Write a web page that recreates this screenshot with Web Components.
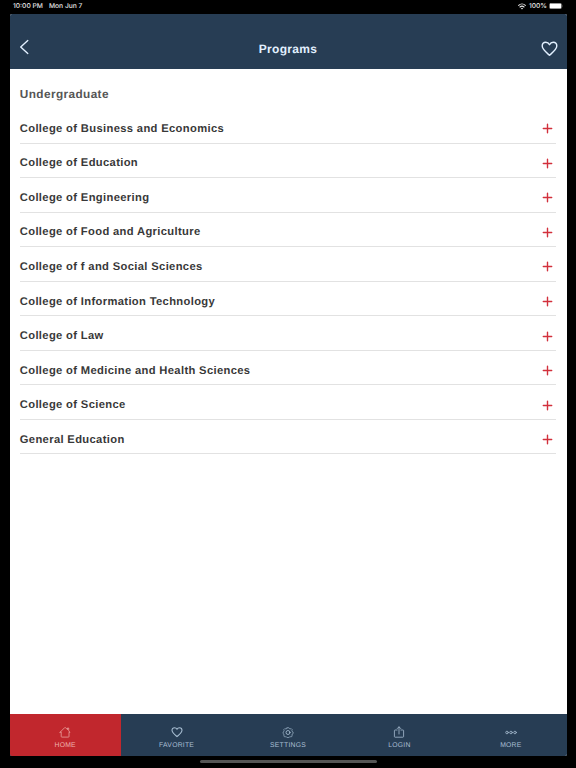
<!DOCTYPE html>
<html lang="en">
<head>
<meta charset="utf-8">
<title>Programs</title>
<style>
    html, body {
        margin: 0;
        height: 100%;
        background: #000;
        overflow: hidden;
    }
</style>
</head>
<body>
<programs-app></programs-app>

<script>
const icons = {
    back: '<svg width="10" height="16" viewBox="0 0 10 16"><path d="M8.8 1.6 1.7 8l7.1 6.4" stroke-width="1.4"/></svg>',
    heart: '<svg width="17" height="16" viewBox="0 0 17 16"><path d="M8.5 14.3C5.8 11.9 1.2 8.4 1.2 5.1c0-2.2 1.6-3.8 3.6-3.8 1.6 0 2.9.8 3.7 2.4.8-1.6 2.1-2.4 3.7-2.4 2 0 3.6 1.6 3.6 3.8 0 3.3-4.6 6.8-7.3 9.2z" stroke-width="1.4"/></svg>',
    plus: '<svg width="11" height="11" viewBox="0 0 11 11"><path d="M5.5 1.3v8.4M1.3 5.5h8.4" stroke-width="1.4"/></svg>',
    home: '<svg width="12" height="12" viewBox="0 0 12 12"><path d="M2.2 6.3v4.2q0 .6.6.6h6.600q.6 0 .6-.6V6.3h1L9.700 4.900V2H8.500v1.700L6.600 1.700q-.5-.5-1 0L1 6.3z" stroke-width=".7"/></svg>',
    favorite: '<svg width="12" height="12" viewBox="0 0 12 12"><path d="M6 10.600C4 8.900 1 6.700 1 4.300c0-1.500 1.100-2.600 2.500-2.600C4.600 1.700 5.500 2.300 6 3.300c.5-1 1.400-1.600 2.500-1.600C9.900 1.700 11 2.800 11 4.300c0 2.400-3 4.600-5 6.300z" stroke-width="1.050"/></svg>',
    settings: '<svg width="12" height="12" viewBox="0 0 12 12"><path d="M5.200 1.700h1.600l.5.900.9.3 1-.3 1 1-.3 1 .3.900.9.500v1.600l-.9.500-.3.900.3 1-1 1-1-.3-.9.300-.5.500H5.200l-.5-.5-.9-.3-1 .3-1-1 .3-1-.3-.9-.7-.5V6l.7-.5.3-.9-.3-1 1-1 1 .3.900-.3z" stroke-width=".65"/><circle cx="6" cy="6.500" r="2" stroke-width=".85"/></svg>',
    login: '<svg width="12" height="12" viewBox="0 0 12 12"><path d="M4.100 4H2.100q-.7 0-.7.700v5.800q0 .7.700.7h7.800q.7 0 .7-.7V4.700q0-.7-.7-.7H7.900M6 8V.9M4.200 2.600 6 .8l1.800 1.800" stroke-width=".8"/></svg>',
    more: '<svg width="12" height="12" viewBox="0 0 12 12"><circle cx="2" cy="6.500" r="1.300" stroke-width=".75"/><circle cx="6" cy="6.500" r="1.300" stroke-width=".75"/><circle cx="10" cy="6.500" r="1.300" stroke-width=".75"/></svg>',
    wifi: '<svg width="8" height="7" viewBox="0 0 8 7"><path d="M.7 2.400a4.700 4.700 0 0 1 6.600 0M2 4a2.900 2.900 0 0 1 4 0" stroke-width="1.100"/><path d="M4 6.500 2.900 5.300q1.100-.9 2.200 0z" fill="currentColor" stroke="none"/></svg>',
    battery: '<svg width="15" height="6" viewBox="0 0 15 6"><rect x=".25" y=".25" width="12.5" height="5.5" rx="1.5" stroke="#777" stroke-width=".5"/><rect x=".7" y=".6" width="11.6" height="4.8" rx="1" fill="#fff" stroke="none"/><path d="M13.5 2q1 1 0 2z" fill="#777" stroke="none"/></svg>'
};

function define(name, html, setup) {
    const template = document.createElement('template');
    template.innerHTML = html;

    customElements.define(name, class extends HTMLElement {
        constructor() {
            super();
            this.attachShadow({mode: 'open'});
            this.shadowRoot.appendChild(template.content.cloneNode(true));
        }

        connectedCallback() {
            if (setup) setup(this.shadowRoot, this);
        }
    });
}

define('app-icon', `
    <style>
        :host { display: block; line-height: 0; }
        svg { display: block; fill: none; stroke: currentColor; stroke-linecap: round; stroke-linejoin: round; }
    </style>
    <div id="icon"></div>
`, (root, el) => {
    root.getElementById('icon').innerHTML = icons[el.getAttribute('name')];
});

define('status-bar', `
    <style>
        :host {
            display: flex;
            align-items: center;
            box-sizing: border-box;
            height: 12px;
            padding: 0 12px 2px 13px;
            color: #e6e6e6;
            font: 500 6.7px/10px Inter, "Liberation Sans", sans-serif;
        }
        .date { margin-left: 6px; flex: 1; }
        .level { margin: 0 2px 0 3px; }
    </style>
    <span>10:00 PM</span>
    <span class="date">Mon Jun 7</span>
    <app-icon name="wifi"></app-icon>
    <span class="level">100%</span>
    <app-icon name="battery"></app-icon>
`);

define('app-header', `
    <style>
        :host {
            display: grid;
            grid-template-columns: 30px 1fr 30px;
            align-items: center;
            box-sizing: border-box;
            height: 55px;
            padding: 14px 9px 0;
            background: #273d54;
            color: #e2f0ff;
        }
        h1 {
            margin: 1px 0 0;
            text-align: center;
            font: bold 12px/16px "Liberation Sans", Arial, sans-serif;
            letter-spacing: 0.3px;
        }
        .back { margin-top: -3px; }
        .fav { justify-self: end; }
    </style>
    <app-icon class="back" name="back"></app-icon>
    <h1><slot></slot></h1>
    <app-icon class="fav" name="heart"></app-icon>
`);

define('program-row', `
    <style>
        :host {
            display: flex;
            align-items: center;
            justify-content: space-between;
            box-sizing: border-box;
            height: 34.54px;
            padding: 6px 3px 0 0;
            border-bottom: 1px solid #e2e2e2;
            color: #383838;
            font: bold 11.2px/14px "Liberation Sans", Arial, sans-serif;
            letter-spacing: 0.35px;
        }
        app-icon { color: #d2303c; }
    </style>
    <span><slot></slot></span>
    <app-icon name="plus"></app-icon>
`);

define('tab-item', `
    <style>
        :host {
            display: flex;
            flex-direction: column;
            align-items: center;
            flex: 1;
            padding-top: 12px;
            gap: 2.6px;
            color: #a9bfd3;
            font: 6.8px/9px "Liberation Sans", Arial, sans-serif;
            letter-spacing: 0.25px;
        }
        :host([active]) { background: #c1272d; color: #efb1ac; }
    </style>
    <app-icon id="icon"></app-icon>
    <span><slot></slot></span>
`, (root, el) => {
    const icon = document.createElement('app-icon');
    icon.setAttribute('name', el.getAttribute('icon'));
    root.getElementById('icon').replaceWith(icon);
});

define('tab-bar', `
    <style>
        :host { display: flex; height: 42px; background: #273d54; }
    </style>
    <slot></slot>
`);

define('programs-app', `
    <style>
        :host {
            display: flex;
            flex-direction: column;
            height: 768px;
            padding-top: 1px;
            box-sizing: border-box;
            background: #000;
            text-rendering: geometricPrecision;
        }
        .screen {
            display: flex;
            flex-direction: column;
            width: 557px;
            height: 742px;
            margin: 1px 0 0 9.5px;
            border-radius: 2px;
            overflow: hidden;
            background: #fff;
        }
        main { flex: 1; padding: 17px 10.5px 0 10.3px; }
        h2 {
            margin: 0 0 7.1px;
            color: #555;
            font: bold 11.8px/16px "Liberation Sans", Arial, sans-serif;
            letter-spacing: 0.4px;
        }
        .indicator {
            width: 177px;
            height: 3px;
            margin: 4px auto 0;
            border-radius: 2px;
            background: #555;
        }
    </style>
    <status-bar></status-bar>
    <div class="screen">
        <app-header>Programs</app-header>
        <main>
            <h2>Undergraduate</h2>
            <program-row>College of Business and Economics</program-row>
            <program-row>College of Education</program-row>
            <program-row>College of Engineering</program-row>
            <program-row>College of Food and Agriculture</program-row>
            <program-row>College of f and Social Sciences</program-row>
            <program-row>College of Information Technology</program-row>
            <program-row>College of Law</program-row>
            <program-row>College of Medicine and Health Sciences</program-row>
            <program-row>College of Science</program-row>
            <program-row>General Education</program-row>
        </main>
        <tab-bar>
            <tab-item icon="home" active>HOME</tab-item>
            <tab-item icon="favorite">FAVORITE</tab-item>
            <tab-item icon="settings">SETTINGS</tab-item>
            <tab-item icon="login">LOGIN</tab-item>
            <tab-item icon="more">MORE</tab-item>
        </tab-bar>
    </div>
    <div class="indicator"></div>
`);
</script>
</body>
</html>
